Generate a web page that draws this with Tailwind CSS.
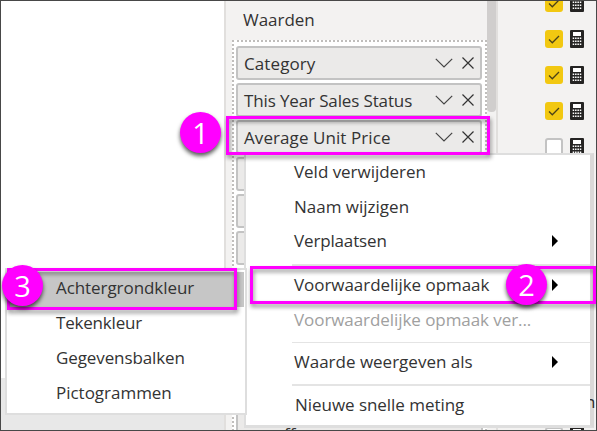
<!DOCTYPE html>
<html lang="nl">
<head>
<meta charset="utf-8">
<title>Voorwaardelijke opmaak</title>
<script src="https://cdn.jsdelivr.net/npm/@tailwindcss/browser@4"></script>
</head>
<body class="overflow-hidden">
<svg class="hidden">
  <symbol id="chev" viewBox="0 0 18 10"><path d="M.8.8 9 9 17.200.8" fill="none" stroke="#444" stroke-width="1.2"/></symbol>
  <symbol id="close" viewBox="0 0 12 12"><path d="M.5.5l11 11M11.500.5l-11 11" fill="none" stroke="#333" stroke-width="1.2"/></symbol>
  <symbol id="check" viewBox="0 0 18 18"><path d="M4 9.500l3.300 3.300L14 6" fill="none" stroke="#4b4218" stroke-width="1.300"/></symbol>
  <symbol id="calc" viewBox="0 0 14 18"><rect width="14" height="18" rx="1" fill="#252423"/><path d="M3 2h8v4H3z" fill="#fff"/><path d="M2.700 8.200h8.600M2.700 11.200h8.600M2.700 14.200h8.600" stroke="#fff" stroke-width="1.600" stroke-dasharray="1.500 .86"/></symbol>
  <symbol id="tri" viewBox="0 0 6 12"><path d="M0 0l6 6-6 6z" fill="#000"/></symbol>
</svg>
<div class="relative flex h-[431px] w-[597px] overflow-hidden bg-white font-['Open_Sans','Noto_Sans',sans-serif] text-[17px] text-[#333]">
  <!-- Report canvas -->
  <div class="flex w-[224px] flex-col justify-end"><div class="h-[53px] bg-[#e8e8e8]"></div></div>
  <!-- Visualization fields -->
  <div class="flex w-[263px] flex-col border-l-2 border-[#e1dfdd] bg-[#f3f2f1] pl-[6px]">
    <div class="h-[40px] shrink-0 pl-[11px] leading-[40px]"><span class="tracking-[-0.03px]">Waarden</span></div>
    <div class="flex h-[350px] shrink-0 flex-col gap-[3px] border-2 border-dotted border-[#c0bebc] bg-white pt-[4px] pr-[3px] pl-[2px]">
      <div class="flex h-[34px] shrink-0 items-center rounded-[3px] border-2 border-[#c3c3c3] bg-[#ebeae9] pr-[6px] pl-[6px]"><span class="flex-1 pt-px tracking-[0.1px]">Category</span><svg class="h-[10px] w-[18px]"><use href="#chev"/></svg><svg class="ml-[9px] h-[12px] w-[12px]"><use href="#close"/></svg></div>
      <div class="flex h-[34px] shrink-0 items-center rounded-[3px] border-2 border-[#c3c3c3] bg-[#ebeae9] pr-[6px] pl-[6px]"><span class="flex-1 pt-px whitespace-nowrap tracking-[-0.13px]">This Year Sales Status</span><svg class="h-[10px] w-[18px]"><use href="#chev"/></svg><svg class="ml-[9px] h-[12px] w-[12px]"><use href="#close"/></svg></div>
      <div class="flex h-[34px] shrink-0 items-center rounded-[3px] border-2 border-[#c3c3c3] bg-[#ebeae9] pr-[6px] pl-[6px]"><span class="flex-1 pt-px whitespace-nowrap tracking-[0.08px]">Average Unit Price</span><svg class="h-[10px] w-[18px]"><use href="#chev"/></svg><svg class="ml-[9px] h-[12px] w-[12px]"><use href="#close"/></svg></div>
      <div class="h-[34px] shrink-0 rounded-[3px] border-2 border-[#c3c3c3] bg-[#ebeae9]"></div>
      <div class="h-[34px] shrink-0 rounded-[3px] border-2 border-[#c3c3c3] bg-[#ebeae9]"></div>
      <div class="h-[34px] shrink-0 rounded-[3px] border-2 border-[#c3c3c3] bg-[#ebeae9]"></div>
    </div>
    <div class="h-[41px] border-x-2 border-dotted border-[#c0bebc] bg-white px-[2px]"><div class="h-[41px] border-x-2 border-[#c3c3c3] bg-[#ebeae9] pt-[34px] pl-[46px] leading-[20px]">ff</div></div>
  </div>
  <!-- Scrollbar -->
  <div class="w-[11px] border-r-2 border-[#e1dfdd] bg-[#f3f2f1]"><div class="h-[112px] w-[9px] rounded-b-[4px] bg-[#d0cecd]"></div></div>
  <!-- Field list -->
  <div class="relative flex flex-1 flex-col gap-[18px] bg-[#f3f2f1] pl-[47px]">
    <div class="-mt-[6px] flex h-[18px] shrink-0 gap-[7px]"><svg class="h-[18px] w-[18px] rounded-[3px] bg-[#f2c811]"><use href="#check"/></svg><svg class="h-[18px] w-[14px]"><use href="#calc"/></svg></div>
    <div class="flex h-[18px] shrink-0 gap-[7px]"><svg class="h-[18px] w-[18px] rounded-[3px] bg-[#f2c811]"><use href="#check"/></svg><svg class="h-[18px] w-[14px]"><use href="#calc"/></svg></div>
    <div class="flex h-[18px] shrink-0 gap-[7px]"><svg class="h-[18px] w-[18px] rounded-[3px] bg-[#f2c811]"><use href="#check"/></svg><svg class="h-[18px] w-[14px]"><use href="#calc"/></svg></div>
    <div class="flex h-[18px] shrink-0 gap-[7px]"><svg class="h-[18px] w-[18px] rounded-[3px] bg-[#f2c811]"><use href="#check"/></svg><svg class="h-[18px] w-[14px]"><use href="#calc"/></svg></div>
    <div class="flex h-[18px] shrink-0 gap-[7px]"><div class="h-[18px] w-[18px] rounded-[3px] border-2 border-[#c3c3c3] bg-white"></div><svg class="h-[18px] w-[14px]"><use href="#calc"/></svg></div>
    <div class="mt-auto -mb-[14px] flex h-[18px] shrink-0 gap-[7px]"><div class="h-[18px] w-[18px] rounded-[3px] border-2 border-[#c3c3c3] bg-white"></div><svg class="h-[18px] w-[14px]"><use href="#calc"/></svg></div>
    <span class="absolute top-[389px] left-[87px]">n</span>
  </div>

  <!-- Context menu -->
  <div class="absolute top-[153px] left-[244px] flex h-[275px] w-[350px] flex-col border-t-2 border-r-4 border-b-[3px] border-l-2 border-[#dedede] border-r-black/10 bg-white bg-clip-padding pl-[46px] whitespace-nowrap">
    <div class="flex h-[35px] items-center pb-[2px] pl-[2px]"><span class="tracking-[-0.03px]">Veld verwijderen</span></div>
    <div class="flex h-[35px] items-center pb-[2px] pl-[2px]"><span>Naam wijzigen</span></div>
    <div class="flex h-[39px] items-center pr-[32px] pb-[7px] pl-[2px]"><span class="flex-1 tracking-[-0.15px]">Verplaatsen</span><svg class="h-[12px] w-[6px]"><use href="#tri"/></svg></div>
    <div class="flex h-[40px] items-center border-t-2 border-[#e4e4e4] pr-[32px] pl-[2px]"><span class="flex-1 tracking-[-0.05px]">Voorwaardelijke opmaak</span><svg class="h-[12px] w-[6px]"><use href="#tri"/></svg></div>
    <div class="flex h-[38px] items-center pb-[7px] pl-[2px] text-[#a0a0a0]"><span class="tracking-[-0.07px]">Voorwaardelijke opmaak ver...</span></div>
    <div class="flex h-[42px] items-center border-t border-[#e4e4e4] pr-[32px] pb-[4px] pl-[2px]"><span class="flex-1">Waarde weergeven als</span><svg class="h-[12px] w-[6px]"><use href="#tri"/></svg></div>
    <div class="flex h-[41px] items-center border-t-2 border-[#e4e4e4] pb-[2px] pl-[3px]"><span class="tracking-[-0.04px]">Nieuwe snelle meting</span></div>
  </div>

  <!-- Formatting submenu -->
  <div class="absolute top-[268px] left-[5px] flex h-[147px] w-[242px] flex-col border-2 border-[#dedede] bg-white pt-[2px]">
    <div class="mr-px flex h-[35px] items-center bg-[#c6c6c6] pb-[4px] pl-[49px]"><span class="tracking-[-0.07px]">Achtergrondkleur</span></div>
    <div class="flex h-[35px] items-center pb-[4px] pl-[49px]"><span class="tracking-[-0.2px]">Tekenkleur</span></div>
    <div class="flex h-[35px] items-center pb-[4px] pl-[49px]"><span class="tracking-[-0.1px]">Gegevensbalken</span></div>
    <div class="flex h-[35px] items-center pb-[4px] pl-[49px]"><span class="tracking-[-0.02px]">Pictogrammen</span></div>
  </div>

  <!-- Step callouts -->
  <div class="absolute top-[116px] left-[226px] h-[39px] w-[264px] border-3 border-[#ff00ff] drop-shadow-[1px_3px_2px_rgba(0,0,0,0.45)]"></div>
  <div class="absolute top-[266px] left-[250px] h-[38px] w-[346px] border-3 border-[#ff00ff] drop-shadow-[1px_3px_2px_rgba(0,0,0,0.45)]"></div>
  <div class="absolute top-[268px] left-[7px] h-[42px] w-[230px] border-3 border-[#ff00ff] drop-shadow-[1px_3px_2px_rgba(0,0,0,0.45)]"></div>
  <div class="absolute top-[112px] left-[180px] flex h-[41px] w-[41px] items-center justify-center rounded-full bg-[#ff00ff] text-[29px] text-white shadow-[0_3px_4px_rgba(0,0,0,0.65)]">1</div>
  <div class="absolute top-[264px] left-[506px] flex h-[41px] w-[41px] items-center justify-center rounded-full bg-[#ff00ff] text-[29px] text-white shadow-[0_3px_4px_rgba(0,0,0,0.65)]">2</div>
  <div class="absolute top-[265px] left-[2px] flex h-[41px] w-[41px] items-center justify-center rounded-full bg-[#ff00ff] text-[29px] text-white shadow-[0_3px_4px_rgba(0,0,0,0.65)]">3</div>
  <div class="pointer-events-none absolute inset-0 border border-[#484848]"></div>
</div>
</body>
</html>
